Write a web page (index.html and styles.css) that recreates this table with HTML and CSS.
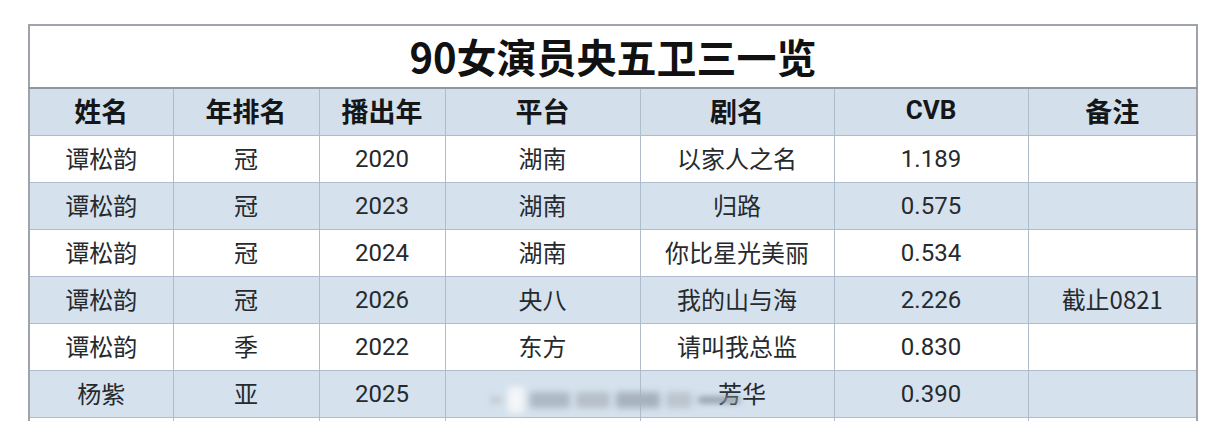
FILE: index.html
```html
<!DOCTYPE html>
<html lang="zh">
<head>
<meta charset="utf-8">
<link rel="stylesheet" href="styles.css">
</head>
<body>
<div class="page">
  <div class="wrap">
    <table class="sheet">
      <colgroup>
        <col class="c1"><col class="c2"><col class="c3"><col class="c4"><col class="c5"><col class="c6"><col class="c7">
      </colgroup>
      <thead>
        <tr><th class="title" colspan="7">90女演员央五卫三一览</th></tr>
        <tr class="head">
          <th>姓名</th><th>年排名</th><th>播出年</th><th>平台</th><th>剧名</th><th class="lat">CVB</th><th>备注</th>
        </tr>
      </thead>
      <tbody>
        <tr><td>谭松韵</td><td>冠</td><td class="num">2020</td><td>湖南</td><td>以家人之名</td><td class="num">1.189</td><td></td></tr>
        <tr class="alt"><td>谭松韵</td><td>冠</td><td class="num">2023</td><td>湖南</td><td>归路</td><td class="num">0.575</td><td></td></tr>
        <tr><td>谭松韵</td><td>冠</td><td class="num">2024</td><td>湖南</td><td>你比星光美丽</td><td class="num">0.534</td><td></td></tr>
        <tr class="alt"><td>谭松韵</td><td>冠</td><td class="num">2026</td><td>央八</td><td>我的山与海</td><td class="num">2.226</td><td>截止0821</td></tr>
        <tr><td>谭松韵</td><td>季</td><td class="num">2022</td><td>东方</td><td>请叫我总监</td><td class="num">0.830</td><td></td></tr>
        <tr class="alt"><td>杨紫</td><td>亚</td><td class="num">2025</td><td></td><td class="shift">芳华</td><td class="num">0.390</td><td></td></tr>
        <tr><td>&nbsp;</td><td></td><td></td><td></td><td></td><td></td><td></td></tr>
      </tbody>
    </table>
    <div class="smear">
      <span class="b b1"></span><span class="b b2"></span><span class="b b3"></span><span class="b b4"></span><span class="b b5"></span><span class="b b6"></span><span class="b b7"></span>
    </div>
  </div>
</div>
</body>
</html>
```
FILE: styles.css
```css
html, body {
  margin: 0;
  padding: 0;
  background: #ffffff;
  overflow: hidden;
}
.page {
  padding: 24px 0 0 28px;
  font-family: "Noto Sans CJK SC", "Noto Sans", sans-serif;
  color: #1f2326;
}
.wrap {
  position: relative;
  width: 1168px;
}
.sheet {
  border-collapse: collapse;
  width: 1168px;
  table-layout: fixed;
  border: 2px solid #9ea4aa;
}
.c1 { width: 144px; }
.c2 { width: 146px; }
.c3 { width: 126px; }
.c4 { width: 195px; }
.c5 { width: 194px; }
.c6 { width: 194px; }
.c7 { width: 169px; }
.sheet th, .sheet td {
  border: 1px solid #aebccb;
  text-align: center;
  padding: 0 0 2px 0;
  line-height: 1.2;
}
.title {
  height: 59px;
  font-size: 40px;
  font-weight: 700;
  color: #111;
  background: #ffffff;
  border-bottom: 2px solid #8f979f !important;
}
.head th {
  height: 44px;
  font-size: 27px;
  font-weight: 700;
  color: #141618;
  background: #d3e0ec;
}
.head th.lat {
  font-family: Roboto, "Noto Sans CJK SC", sans-serif;
  font-size: 26px;
}
.sheet td {
  height: 44px;
  font-size: 24px;
  color: #262a2e;
  background: #ffffff;
}
.sheet td.num {
  font-family: Roboto, "Noto Sans CJK SC", sans-serif;
  padding: 1px 0 0 0;
}
.sheet tr.alt td {
  background: #d5e2ed;
}
.shift {
  padding-left: 10px !important;
}
.smear {
  position: absolute;
  left: 462px;
  top: 362px;
  width: 250px;
  height: 28px;
  display: flex;
  align-items: center;
  gap: 6px;
  filter: blur(3px);
}
.b {
  display: block;
  height: 16px;
  background: #b9c3cd;
  border-radius: 2px;
}
.b1 { width: 12px; height: 8px; background: #c4ccd4; }
.b2 { width: 16px; height: 26px; background: #f4f6f8; }
.b3 { width: 40px; background: #aeb9c4; }
.b4 { width: 34px; background: #b6c0ca; }
.b5 { width: 44px; background: #a7b2be; }
.b6 { width: 26px; background: #bcc5ce; }
.b7 { width: 42px; height: 6px; background: #8a96a3; }
```
